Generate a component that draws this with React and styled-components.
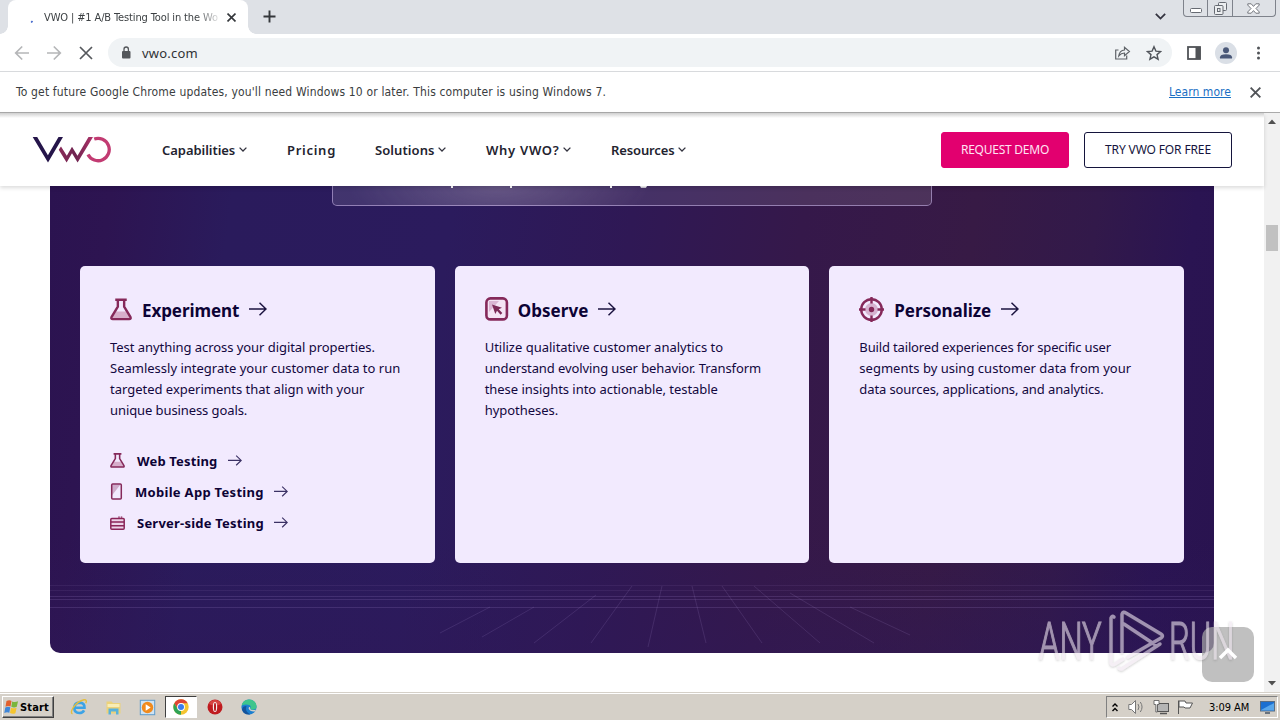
import React from "react";
import styled, { createGlobalStyle } from "styled-components";

const GlobalStyle = createGlobalStyle`
  * { box-sizing: border-box; }
  body { margin: 0; background: #fff; overflow: hidden; }
  svg { display: block; flex: none; }
`;

const ui = `"DejaVu Sans Condensed", "Noto Sans", sans-serif`;
const site = `"Noto Sans", "Open Sans", sans-serif`;

const Screen = styled.div`
  width: 1280px;
  height: 720px;
  display: flex;
  flex-direction: column;
  overflow: hidden;
  position: relative;
  font-family: ${site};
`;

const Text = styled.span`
  white-space: nowrap;
  letter-spacing: ${(p) => p.$ls || 0}px;
`;

/* Browser chrome */
const TabStrip = styled.div`
  height: 34px;
  flex: none;
  background: #dee1e6;
  display: flex;
  padding-left: 8px;
`;
const Tab = styled.div`
  width: 240px;
  height: 34px;
  background: #fff;
  border-radius: 8px 8px 0 0;
  display: flex;
  align-items: center;
  justify-content: space-between;
  padding: 0 12px 0 20px;
  position: relative;
  color: #3c4043;
  font: 11px ${ui};
  &::before, &::after {
    content: "";
    position: absolute;
    bottom: 0;
    width: 8px;
    height: 8px;
  }
  &::before { left: -8px; background: radial-gradient(circle at 0 0, transparent 7.5px, #fff 8px); }
  &::after { right: -8px; background: radial-gradient(circle at 100% 0, transparent 7.5px, #fff 8px); }
`;
const TabTitle = styled(Text)`
  margin: 0 auto 0 11px;
  width: 176px;
  overflow: hidden;
  mask-image: linear-gradient(90deg, #000 152px, transparent 178px);
`;
const NewTab = styled.div`
  margin: 10px 0 0 15px;
`;
const TabSearch = styled.div`
  margin: 13px 17px 0 auto;
`;
const WindowButtons = styled.div`
  display: flex;
  width: 93px;
  height: 17px;
  margin-right: 4px;
  border: 1px solid #7e828b;
  border-top: 0;
  border-radius: 0 0 4px 4px;
`;
const WindowButton = styled.div`
  width: ${(p) => p.$w}px;
  display: flex;
  align-items: center;
  justify-content: center;
  border-right: ${(p) => (p.$last ? 0 : "1px solid #7e828b")};
`;

const Toolbar = styled.div`
  height: 38px;
  flex: none;
  background: #fff;
  border-bottom: 1px solid #d8dadd;
  display: flex;
  align-items: center;
  padding: 0 12px 0 14px;
`;
const NavButtons = styled.div`
  display: flex;
  gap: 16px;
  width: 94px;
`;
const Omnibox = styled.div`
  width: 1064px;
  height: 29px;
  border-radius: 15px;
  background: #f0f3f5;
  display: flex;
  align-items: center;
  padding: 0 10px 0 12px;
  color: #303236;
  font: 13px ${site};
`;
const Url = styled(Text)`
  margin: 0 auto 0 10px;
`;
const OmniActions = styled.div`
  display: flex;
  gap: 15px;
`;
const ToolbarActions = styled.div`
  display: flex;
  align-items: center;
  gap: 14px;
  margin-left: auto;
`;
const Avatar = styled.div`
  width: 22px;
  height: 22px;
  border-radius: 50%;
  background: #dadfe6;
  overflow: hidden;
`;

const InfoBar = styled.div`
  height: 41px;
  flex: none;
  background: #fff;
  border-bottom: 1px solid #aaa;
  display: flex;
  align-items: center;
  padding: 0 19px 0 16px;
  font: 12px ${ui};
  color: #3a3d40;
`;
const InfoLink = styled(Text)`
  margin: 0 19px 0 auto;
  color: #1a6fc4;
  text-decoration: underline;
`;

/* Page */
const Viewport = styled.div`
  height: 579px;
  flex: none;
  display: flex;
`;
const Page = styled.div`
  width: 1264px;
  display: flex;
  flex-direction: column;
  background: #fff;
`;
const Header = styled.header`
  height: 73px;
  flex: none;
  display: flex;
  align-items: center;
  padding: 0 32px;
  background: linear-gradient(#cfcfcf 0, #e2e2e2 2px, #fff 5px);
  box-shadow: 0 2px 4px rgba(0, 0, 0, 0.14);
  position: relative;
  z-index: 1;
`;
const Nav = styled.nav`
  display: flex;
  gap: 40px;
  margin-left: 50px;
`;
const NavItem = styled.div`
  display: flex;
  align-items: center;
  gap: 3px;
  height: 20px;
  font: 600 13px/20px ${site};
  color: #23232f;
  & > span { width: ${(p) => p.$w}px; }
`;
const Actions = styled.div`
  margin-left: auto;
  display: flex;
  gap: 15px;
`;
const Button = styled.button`
  width: ${(p) => p.$w}px;
  height: 36px;
  padding: 0 0 1px;
  border-radius: 3px;
  border: 1px solid ${(p) => (p.$primary ? "#e2006f" : "#14143c")};
  background: ${(p) => (p.$primary ? "#e2006f" : "#fff")};
  color: ${(p) => (p.$primary ? "#ffe3f2" : "#14143c")};
  font: 12px ${site};
`;

const Hero = styled.section`
  width: 1164px;
  height: 467px;
  margin-left: 50px;
  flex: none;
  border-radius: 0 0 10px 10px;
  overflow: hidden;
  display: flex;
  flex-direction: column;
  align-items: center;
  background:
    linear-gradient(rgba(46, 24, 88, 0) 350px, rgba(46, 24, 88, 0.45) 467px),
    linear-gradient(97deg, #2b1350 0%, #2d1451 5%, #2a1b5c 15%, #2b1b5d 33%, #2f1855 48%, #35184a 62%, #371a45 76%, #32194a 86%, #2a1452 94%, #29134f 100%);
`;
const Banner = styled.div`
  width: 600px;
  height: 20px;
  flex: none;
  border: 1px solid rgba(190, 170, 220, 0.65);
  border-top: 0;
  border-radius: 0 0 5px 5px;
  background:
    radial-gradient(ellipse 150px 50px at 165px 0, rgba(150, 135, 165, 0.42), transparent),
    rgba(255, 255, 255, 0.11);
`;
const Cards = styled.div`
  width: 1104px;
  height: 297px;
  margin-top: 60px;
  flex: none;
  display: grid;
  grid-template-columns: repeat(3, 1fr);
  grid-template-rows: 297px;
  gap: 20px;
`;
const Card = styled.article`
  background: #f2eafe;
  border-radius: 5px;
  padding: 30px 30px 0;
  color: #130840;
`;
const CardTitle = styled.h3`
  margin: 0;
  height: 27px;
  display: flex;
  align-items: center;
  font: 700 17px/27px ${site};
  color: #0d0335;
  & > span { margin: 2px 10px 0 ${(p) => p.$gap}px; }
  & > svg { margin-bottom: 1px; }
`;
const CardText = styled.p`
  margin: 14px 0 0;
  display: flex;
  flex-direction: column;
  font: 13px/21px ${site};
`;
const Links = styled.div`
  margin-top: 24px;
  display: flex;
  flex-direction: column;
`;
const LinkRow = styled.div`
  height: 31px;
  display: flex;
  align-items: center;
  font: 700 13px/20px ${site};
  color: #0d0335;
  & > span { margin: 1px 10px 0 ${(p) => p.$gap}px; }
`;
const Grid = styled.svg`
  margin-top: 10px;
`;

const ScrollBar = styled.div`
  width: 16px;
  background: #f1f1f1;
  display: flex;
  flex-direction: column;
  align-items: center;
  padding: 6px 0 6px;
`;
const Thumb = styled.div`
  width: 12px;
  height: 26px;
  margin: 101px 0 auto;
  background: #c1c1c1;
`;

const TopButton = styled.div`
  position: absolute;
  left: 1202px;
  top: 627px;
  width: 52px;
  height: 55px;
  border-radius: 10px;
  background: rgba(168, 168, 168, 0.72);
`;
const Watermark = styled.svg`
  position: absolute;
  left: 1030px;
  top: 600px;
`;

/* Taskbar */
const Taskbar = styled.footer`
  height: 28px;
  flex: none;
  background: #d5d0c8;
  border-top: 1px solid #d5d0c8;
  box-shadow: inset 0 1px #fff;
  display: flex;
  align-items: center;
  padding: 1px 2px 0 2px;
  font: 11px ${ui};
  color: #000;
`;
const Start = styled.div`
  width: 52px;
  height: 22px;
  display: flex;
  align-items: center;
  gap: 1px;
  padding-left: 1px;
  font-weight: 700;
  border: 1px solid;
  border-color: #fff #404040 #404040 #fff;
  box-shadow: inset -1px -1px #808080;
`;
const Launchers = styled.div`
  display: flex;
  align-items: center;
  margin-left: 8px;
`;
const Launcher = styled.div`
  width: 34px;
  height: 22px;
  display: flex;
  align-items: center;
  justify-content: center;
`;
const ActiveLauncher = styled(Launcher)`
  width: 32px;
  margin: 0 1px;
  background: #fff;
  border: 1px solid;
  border-color: #404040 #fff #fff #404040;
`;
const Tray = styled.div`
  margin-left: auto;
  width: 172px;
  height: 22px;
  border: 1px solid;
  border-color: #808080 #fff #fff #808080;
  display: flex;
  align-items: center;
  padding-left: 4px;
`;
const Clock = styled(Text)`
  margin: 0 11px 0 11px;
`;

const Chevron = ({ w = 8, h = 5, c = "#33333f", s = 1.3 }) => (
  <svg width={w} height={h} viewBox="0 0 8 5" fill="none" stroke={c} strokeWidth={s}>
    <path d="M.6.6 4 4 7.400.6" />
  </svg>
);
const Arrow = ({ w = 18, c = "#1c1440" }) => (
  <svg width={w} height={(w * 14) / 18} viewBox="0 0 18 14" fill="none" stroke={c} strokeWidth="1.5">
    <path d="M0 7h17M10.5.8 17 7l-6.500 6.200" />
  </svg>
);
const Cross = ({ size = 9, c = "#3c4043", s = 1.8 }) => (
  <svg width={size} height={size} viewBox="0 0 10 10" stroke={c} strokeWidth={s}>
    <path d="M.6.6l8.800 8.800M9.400.6.6 9.400" />
  </svg>
);
const BackArrow = ({ flip }) => (
  <svg width="16" height="16" viewBox="0 0 16 16" fill="none" stroke="#b5b6b8" strokeWidth="1.7" transform={flip ? "scale(-1 1)" : undefined}>
    <path d="M15 8H2M8.200 1.500 1.700 8l6.500 6.500" />
  </svg>
);
const Flask = ({ w, h, s }) => (
  <svg width={w} height={h} viewBox="0 0 23 23" fill="none">
    <path d="M6.500 13.500h10l4.500 6.500q.3 1.500-1 1.500H3q-1.300 0-1-1.500z" fill="#d7aecb" />
    <path d="M5.500 1.300h12M8.200 1.500v7L1.600 19.500q-.8 2 1.400 2.100h17q2.200-.1 1.400-2.100L14.800 8.500v-7" stroke="#85295a" strokeWidth={s} />
  </svg>
);
const Phone = () => (
  <svg width="13" height="17" viewBox="0 0 13 17">
    <path d="M1.500 1.500h9L1.500 13z" fill="#cfaccb" />
    <rect x="1.700" y="1" width="9.600" height="15" rx="1" fill="none" stroke="#85295a" strokeWidth="1.500" />
  </svg>
);
const Server = () => (
  <svg width="15" height="14" viewBox="0 0 15 14" fill="none" stroke="#8a2558" strokeWidth="1.500">
    <rect x=".8" y="2.400" width="13.400" height="10.800" rx="1" fill="#ecd3e8" />
    <path d="M1 6h13M1 9.700h13M9 1.700V.5M11.500 1.700V.5" />
  </svg>
);
const Observe = () => (
  <svg width="24" height="24" viewBox="0 0 24 24">
    <rect x="1.400" y="1.400" width="20.500" height="21" rx="4" fill="#f4e4f4" stroke="#85295a" strokeWidth="2.600" />
    <path d="M4 4h10L4 15z" fill="#dab6d3" />
    <path d="M7 7.500l10 3.200-3.300 1.600 3.600 3.800-1.700 1.600-3.600-3.900-1.700 3.300z" fill="#7c2956" />
  </svg>
);
const Target = () => (
  <svg width="25" height="25" viewBox="0 0 25 25" fill="none" stroke="#85295a" strokeWidth="2.400">
    <circle cx="12.500" cy="12.500" r="10.300" />
    <circle cx="12.500" cy="12.500" r="6.500" fill="#d6b2d0" stroke="none" />
    <circle cx="12.500" cy="12.500" r="2.700" fill="#85295a" stroke="none" />
    <path d="M12.500 0v6.500M12.500 18.500V25M0 12.500h6.500M18.500 12.500H25" />
  </svg>
);
const Logo = () => (
  <svg width="80" height="28" viewBox="0 0 80 28" fill="none">
    <defs>
      <linearGradient id="w" x1="0" x2="1"><stop stopColor="#8a2b58" /><stop offset=".5" stopColor="#6d2450" /><stop offset="1" stopColor="#b03268" /></linearGradient>
    </defs>
    <path d="M.7 1h4.500l10.700 18.300L26.500 1H31L16 26.500z" fill="#25154a" />
    <path d="M29 10.500l5.800 9.300L40 10.800l5.500 9L56.500 1h4.500L45.600 26.500 40 17.300 34.600 26.500 26.700 13.800z" fill="url(#w)" />
    <path d="M62.200 3A11.200 11.200 0 1 1 56 18.500" stroke="#c23b72" strokeWidth="3.300" />
  </svg>
);

const cards = [
  {
    title: "Experiment", ls: -0.08, gap: 10, icon: <Flask w={22} h={23} s={2.5} />,
    lines: [["Test anything across your digital properties.", -0.05], ["Seamlessly integrate your customer data to run", 0], ["targeted experiments that align with your", -0.01], ["unique business goals.", -0.09]],
    links: [
      ["Web Testing", 0.16, 12, <Flask w={15} h={15} s={2.4} />],
      ["Mobile App Testing", 0.3, 12, <Phone />],
      ["Server-side Testing", 0.22, 12, <Server />],
    ],
  },
  {
    title: "Observe", ls: 0.05, gap: 9, icon: <Observe />,
    lines: [["Utilize qualitative customer analytics to", -0.01], ["understand evolving user behavior. Transform", -0.1], ["these insights into actionable, testable", -0.04], ["hypotheses.", -0.03]],
  },
  {
    title: "Personalize", ls: -0.05, gap: 10, icon: <Target />,
    lines: [["Build tailored experiences for specific user", -0.15], ["segments by using customer data from your", 0.02], ["data sources, applications, and analytics.", -0.1]],
  },
];
const nav = [
  ["Capabilities", 74, -0.05, true],
  ["Pricing", 48, 0.72, false],
  ["Solutions", 60, 0.08, true],
  ["Why VWO?", 74, 0.7, true],
  ["Resources", 64, -0.12, true],
];

export default function App() {
  return (
    <Screen>
      <GlobalStyle />
      <TabStrip>
        <Tab>
          <svg width="5" height="12"><path d="M4.500 10.500 3.200 12" transform="translate(0 -.5)" stroke="#3d62c9" strokeWidth="1.600" /></svg>
          <TabTitle $ls={-0.13}>VWO | #1 A/B Testing Tool in the Wo</TabTitle>
          <Cross size={9} c="#34373b" />
        </Tab>
        <NewTab>
          <svg width="13" height="13" stroke="#34373b" strokeWidth="1.900"><path d="M6.500 .5v12M.5 6.500h12" /></svg>
        </NewTab>
        <TabSearch><Chevron w={11} h={7} s={1.3} /></TabSearch>
        <WindowButtons>
          <WindowButton $w={25}>
            <svg width="12" height="12" fill="#fff" stroke="#666a72"><rect x=".5" y="6.500" width="11" height="4" rx="1" /></svg>
          </WindowButton>
          <WindowButton $w={25}>
            <svg width="13" height="13" fill="#eceef0" stroke="#666a72"><rect x="4.500" y=".5" width="8" height="8" rx="1" /><rect x=".5" y="3.500" width="8.500" height="9" rx="1" /><rect x="3.500" y="6.500" width="2.500" height="3" /></svg>
          </WindowButton>
          <WindowButton $w={43} $last>
            <svg width="13" height="11" viewBox="0 0 13 11" fill="#fff" stroke="#666a72" strokeWidth=".9"><path d="M.8.8h3.400l2.300 2.600L8.800.8h3.400v1.300L9 5.500l3.200 3.400v1.300H8.800L6.500 7.600 4.200 10.200H.8V8.900L4 5.500.8 2.100z" /></svg>
          </WindowButton>
        </WindowButtons>
      </TabStrip>

      <Toolbar>
        <NavButtons>
          <BackArrow />
          <BackArrow flip />
          <svg width="16" height="16" stroke="#55585c" strokeWidth="1.700"><path d="M2 2l12 12M14 2 2 14" /></svg>
        </NavButtons>
        <Omnibox>
          <svg width="12" height="14" viewBox="0 0 12 14"><rect x="2" y="5" width="8.500" height="7.500" rx="1" fill="#54575b" /><path d="M4 5.500V3.200a2.200 2.200 0 0 1 4.400 0v2.300" fill="none" stroke="#54575b" strokeWidth="1.300" /></svg>
          <Url $ls={0.22}>vwo.com</Url>
          <OmniActions>
            <svg width="17" height="16" fill="none" stroke="#5f6368" strokeWidth="1.200"><path d="M4.500 5H1.700v9h11v-3.500M4.800 10.800Q5.600 5.200 10.500 5V2.200L15.400 6.500 10.500 10.600V8Q7 8 4.800 10.800z" /></svg>
            <svg width="16" height="16" viewBox="0 0 16 16" fill="none" stroke="#50545a" strokeWidth="1.400"><path d="M8 1.700l1.900 4.400 4.700.4-3.600 3.100 1.100 4.600L8 11.800l-4.100 2.400L5 9.600 1.400 6.500l4.700-.4z" /></svg>
          </OmniActions>
        </Omnibox>
        <ToolbarActions>
          <svg width="14" height="14"><rect x="1" y="1" width="12" height="12" fill="none" stroke="#505357" strokeWidth="1.800" /><rect x="8.500" y="1" width="5" height="12" fill="#505357" /></svg>
          <Avatar>
            <svg width="22" height="22" fill="#4a5878"><circle cx="11" cy="8.200" r="3" /><path d="M5 16.500v-1.200q0-3 6-3t6 3v1.200z" /></svg>
          </Avatar>
          <svg width="17" height="14" fill="#505357"><circle cx="7.500" cy="2" r="1.500" /><circle cx="7.500" cy="7" r="1.500" /><circle cx="7.500" cy="12" r="1.500" /></svg>
        </ToolbarActions>
      </Toolbar>

      <InfoBar>
        <Text $ls={0.16}>To get future Google Chrome updates, you'll need Windows 10 or later. This computer is using Windows 7.</Text>
        <InfoLink $ls={0.05}>Learn more</InfoLink>
        <Cross size={11} c="#505357" s={1.7} />
      </InfoBar>

      <Viewport>
        <Page>
          <Header>
            <Logo />
            <Nav>
              {nav.map(([label, w, ls, menu]) => (
                <NavItem key={label} $w={w}>
                  <Text $ls={ls}>{label}</Text>
                  {menu && <Chevron />}
                </NavItem>
              ))}
            </Nav>
            <Actions>
              <Button $w={128} $primary><Text $ls={-0.25}>REQUEST DEMO</Text></Button>
              <Button $w={148}><Text $ls={-0.13}>TRY VWO FOR FREE</Text></Button>
            </Actions>
          </Header>
          <Hero>
            <Banner>
              <svg width="598" height="4" fill="#fff"><path d="M118 0h2v2h-2zM177 0h2v2h-2zM277 0h2v2h-2zM307 0h7l-1 1.800h-5z" /></svg>
            </Banner>
            <Cards>
              {cards.map((c) => (
                <Card key={c.title}>
                  <CardTitle $gap={c.gap}>
                    {c.icon}
                    <Text $ls={c.ls}>{c.title}</Text>
                    <Arrow />
                  </CardTitle>
                  <CardText>
                    {c.lines.map(([line, ls]) => <Text key={line} $ls={ls}>{line}</Text>)}
                  </CardText>
                  {c.links && (
                    <Links>
                      {c.links.map(([label, ls, gap, icon]) => (
                        <LinkRow key={label} $gap={gap}>
                          {icon}
                          <Text $ls={ls}>{label}</Text>
                          <Arrow w={14} c="#3b3164" />
                        </LinkRow>
                      ))}
                    </Links>
                  )}
                </Card>
              ))}
            </Cards>
            <Grid width="1164" height="80" fill="none" stroke="#b79be0">
              <g strokeOpacity=".09">
                <path d="M0 12.500h1164M0 17.500h1164" />
                <path strokeOpacity=".17" d="M0 23.500h1164M0 26.500h1164M0 34.500h1164" />
              </g>
              <g strokeOpacity=".15">
                <path d="M612 13 598 74M642 13 656 70M582 13 541 70M672 13 712 70M546 22 484 70M704 13 770 70M484 34 432 64M740 20 824 70M440 34 390 60M800 34 860 62" />
              </g>
            </Grid>
          </Hero>
        </Page>
        <ScrollBar>
          <svg width="8" height="5"><path d="M0 5 4 .5 8 5z" fill="#505050" /></svg>
          <Thumb />
          <svg width="8" height="5"><path d="M0 0 4 4.500 8 0z" fill="#505050" /></svg>
        </ScrollBar>
      </Viewport>

      <Taskbar>
        <Start>
          <svg width="15" height="16" viewBox="0 0 15 16">
            <path d="M2.500 2q3-1.500 5 0L6.500 7.500q-2.500-1-5 .3z" fill="#e2602d" />
            <path d="M8.200 2.500q3 1.200 5.800-.3l-1.200 5.600q-2.800 1.200-5.500 0z" fill="#7bb63c" />
            <path d="M1.300 8.500q2.700-1.200 5-.2l-1 5.400q-2.200-1.200-5 .2z" fill="#3f86d8" />
            <path d="M7 8.700q2.800 1.200 5.600 0l-1.200 5.500q-2.700 1.200-5.400-.2z" fill="#f5c52f" />
          </svg>
          <Text $ls={0.17}>Start</Text>
        </Start>
        <Launchers>
          <Launcher>
            <svg width="18" height="18" viewBox="0 0 18 18" fill="none"><path d="M4.500 9.800h10q.3-5-5-5.200-5.200.3-5.200 5.400 0 4.800 5 5 3.300 0 4.800-2.700" stroke="#3ca3e6" strokeWidth="2.600" /><path d="M2.500 15.800Q0 15 3.200 9.500 8 3 14 1.800q3.500-.3 1.800 3.500" stroke="#e4bd3d" strokeWidth="1.400" /></svg>
          </Launcher>
          <Launcher>
            <svg width="17" height="17" viewBox="0 0 17 17"><path d="M1.500 2.500h5l1.500 1.500h7.500v10.500h-14z" fill="#ecd27a" /><path d="M2.500 5h12v3h-12z" fill="#f9edb5" /><path d="M3.500 15.500V9.500h10v6h-2.500v-3h-5v3z" fill="#58b1dc" /></svg>
          </Launcher>
          <Launcher>
            <svg width="17" height="17" viewBox="0 0 17 17"><rect x="1.300" y="1.300" width="14.400" height="14.400" fill="#cfe3f3" stroke="#5d9ccb" /><circle cx="8.500" cy="8.500" r="5.700" fill="#f08a1d" /><path d="M6.700 5.300 11.700 8.500l-5 3.200z" fill="#fff" /></svg>
          </Launcher>
          <ActiveLauncher>
            <svg width="16" height="16" viewBox="0 0 16 16"><circle cx="8" cy="8" r="7.700" fill="#f4c430" /><path d="M1.300 4.200A7.700 7.700 0 0 1 14.700 4.200L8 4.300 4.700 9.800z" fill="#de4435" /><path d="M1.300 4.200 4.700 9.900 8 11.800 8 15.700A7.700 7.700 0 0 1 1.300 4.200z" fill="#2fa355" /><path d="M8 15.700 11.300 10z" fill="#f4c430" /><circle cx="8" cy="8" r="3.900" fill="#fff" /><circle cx="8" cy="8" r="3" fill="#3b7ded" /></svg>
          </ActiveLauncher>
          <Launcher>
            <svg width="16" height="16" viewBox="0 0 16 16"><circle cx="8" cy="8" r="7.500" fill="#bf1b1f" /><path d="M2 5Q4 1 8 1t6 4Q8 8 2 5z" fill="#e8605a" opacity=".6" /><ellipse cx="8" cy="8" rx="2.200" ry="5" fill="#f6eeee" /><ellipse cx="8" cy="8" rx="1" ry="4.200" fill="#b51519" /></svg>
          </Launcher>
          <Launcher>
            <svg width="16" height="16" viewBox="0 0 16 16"><circle cx="8" cy="8" r="7.600" fill="#1b7fd0" /><path d="M.6 6.500Q2 .4 8 .4q7 .4 7.600 6.600 0 3.500-3.500 3.800-2.500.2-3-1.300 1.500-2.500-.8-3.500-4-1.200-7.700.5z" fill="#3dc58d" /><path d="M5.500 7Q3.500 13 9.500 15.400q-7 1-8.500-5Q1.500 7 5.500 7z" fill="#14539c" /><path d="M9.100 9.500q.5 1.700 3 1.600 1.800 0 3-.7l-1 2Q9 13 7.600 9.500q0-2 1.400-1.500z" fill="#d5d0c8" /></svg>
          </Launcher>
        </Launchers>
        <Tray>
          <svg width="9" height="11" fill="none" stroke="#000" strokeWidth="1.400"><path d="M1.500 4.500 4 2l2.500 2.500M1.500 9 4 6.500 6.500 9" /></svg>
          <svg width="33" height="16" viewBox="-8 0 33 16" fill="#fff" stroke="#777"><path d="M.8 5.500h2.700l4-4v13l-4-4H.8z" /><path d="M10 5q2 3 0 6M12.300 3q3.500 5 0 10" fill="none" /></svg>
          <svg width="17" height="16"><rect x="4.500" y="4.500" width="11" height="8" fill="#b5b5b5" stroke="#555" /><path d="M1 1.500h5v4H4.300V13h-1.500V5.500H1z" fill="#fff" stroke="#555" strokeWidth=".8" /><path d="M7 14.500h7" stroke="#555" strokeWidth="1.500" /></svg>
          <svg width="28" height="16" viewBox="-7 0 28 16" fill="#fff" stroke="#555"><path d="M1.500 15V1.500" /><path d="M2 2h6l1 2h6.500L13 9H8L7 8H2z" /></svg>
          <Clock $ls={-0.05}>3:09 AM</Clock>
          <svg width="15" height="13"><rect x=".5" y=".5" width="14" height="9.500" fill="#1b6fd0" stroke="#5b6d80" /><path d="M1 9 14 2v7.500H1z" fill="#58a6ea" /><path d="M5 12h5" stroke="#456" strokeWidth="1.500" /></svg>
        </Tray>
      </Taskbar>

      <TopButton />
      <Watermark width="220" height="80" viewBox="0 0 220 80">
        <defs>
          <filter id="sh" x="-10%" y="-10%" width="120%" height="130%"><feDropShadow dx="0" dy="1" stdDeviation="1.2" floodColor="#444" floodOpacity=".45" /></filter>
        </defs>
        <g filter="url(#sh)" opacity=".6">
          <g fill="#efe6f0" stroke="#efe6f0" strokeWidth="1.2" fontFamily="Roboto, sans-serif" fontWeight="300" fontSize="51">
            <text transform="translate(9 59) scale(.64 1)">ANY</text>
            <text transform="translate(139 59) scale(.64 1)">RUN</text>
          </g>
          <g fill="none" stroke="#efe6f0" strokeWidth="3.400" strokeLinejoin="round" strokeLinecap="round">
            <path d="M84 17q-2-2-3 1v45q1 3 4 1l8-5M92 14v38M92 14q1-3 4-1l35 21q3 2 0 4L98 57M94 24l33 22M93 68l37-24M93 68q-1 2-4 0" />
          </g>
        </g>
        <path d="M190 58l8-8 8 8" fill="none" stroke="#fff" strokeWidth="3.400" />
      </Watermark>
    </Screen>
  );
}
